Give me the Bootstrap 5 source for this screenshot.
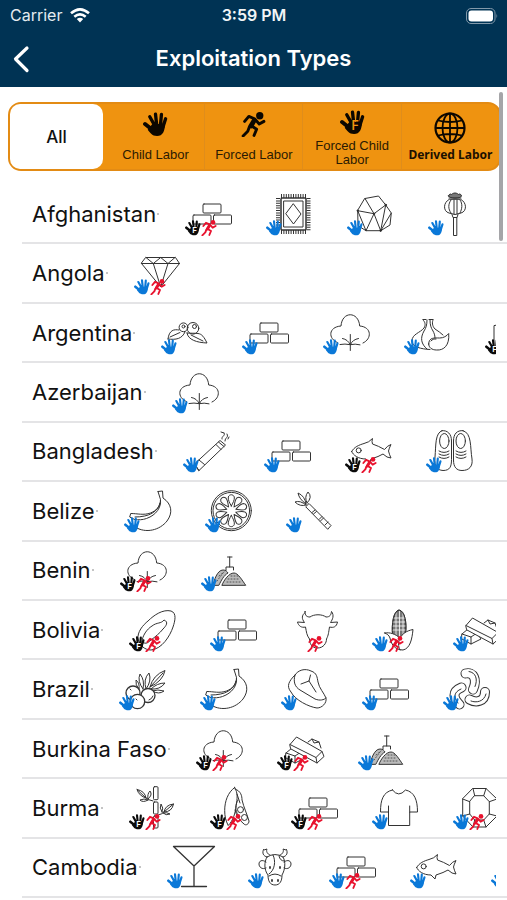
<!DOCTYPE html>
<html lang="en">
<head>
<meta charset="utf-8">
<meta name="viewport" content="width=device-width, initial-scale=1">
<title>Exploitation Types</title>
<link href="https://cdn.jsdelivr.net/npm/bootstrap@5.3.0/dist/css/bootstrap.min.css" rel="stylesheet">
<style>
body{font-family:Inter,"Liberation Sans",sans-serif;color:#111;background:#fff}
.top-area{background:#003354;color:#fff}
.status-bar{height:30px;padding:0 9px 0 10px;font-size:16px;color:#e4ebf0}
.clock{font-weight:600;color:#f2f5f7}
.status-bar>*{flex:1 1 0}
.title-bar{height:57px;padding:0 12px}
.title-bar>*{flex:1 0 auto}
.title-bar .side{flex:1 1 0}
.title-bar h1{font-size:22px;font-weight:600}
.segments{margin:15px 6px 14px 8px;height:69px;background:#ef9310;border:2px solid #e38b14;border-radius:13px}
.segments .seg{flex:1 1 0;min-width:0;padding:0;border:0;border-radius:10px;color:#2b1a02;font:13px/14px "Liberation Sans",Arial,sans-serif}
.segments .seg+input+.seg{border-left:1px solid #df8d1c;border-radius:0}
.segments .seg.first-seg{flex:0 0 19%;margin-right:3px}
.segments .btn-check:checked+.seg{background:#fff;color:#111;font:500 17px/20px Inter,sans-serif;border-radius:10px}
.segments .btn-check:checked+.seg+input+.seg{border-left-color:transparent}
.segments .seg.roomy{gap:11px}
.segments .seg.heavy{font:700 12px/14px "Noto Sans","Open Sans",sans-serif;color:#1c1000;white-space:nowrap}
.segments svg{color:#0c0700;--cut:#ef9310}
.scroll-thumb{position:absolute;right:4px;top:92px;width:4px;height:149px;border-radius:2px;background:#a5a5a8}
.countries{padding:0 0 2px 22px}
.country{flex:1 0 59px;border-bottom:2px solid #e4e4e6;padding:0 11px 0 10px}
.country h2{font-size:22px;line-height:28px;font-weight:400}
.tick{width:2px;height:2px;background:#c4c4c4;margin:0 26px 0 1px}
.goods{gap:33px;min-width:0}
.good{width:48px;height:44px;flex:none;overflow:visible;fill:none;stroke:#333;stroke-width:1;stroke-linejoin:round;stroke-linecap:round;--cut:#fff}
.tone-child{color:#0a78d8}
.tone-forced{color:#e8112d}
.tone-both{color:#0b0b0b}
</style>
<script src="https://cdn.jsdelivr.net/npm/bootstrap@5.3.0/dist/js/bootstrap.bundle.min.js"></script>
</head>
<body>
<svg width="0" height="0" class="position-absolute" aria-hidden="true"><defs>
<symbol id="hand" viewBox="0 0 24 24"><g fill="none" stroke="currentColor" stroke-width="3.2" stroke-linecap="round"><path d="M6.500 4.500l5 9M12 2l1.200 11M17.700 2.300l-1 11M21.700 6.500l-2.500 8"/><path d="M2 11.500l7.500 6" stroke-width="3.800"/></g><path fill="currentColor" stroke="none" d="M9 11.500h12c0 7-2 11.500-7.500 11.500-5 0-7-3.500-9-6z"/></symbol>
<symbol id="handf" viewBox="0 0 24 24"><use href="#hand" width="24" height="24"/><text x="11" y="19" font-family="Inter,sans-serif" font-size="12" font-weight="600" stroke="none" style="fill:var(--cut)">F</text></symbol>
<symbol id="runner" viewBox="0 0 24 24"><circle cx="18" cy="3.600" r="3.500" fill="currentColor" stroke="none"/><g fill="none" stroke="currentColor" stroke-width="2.800" stroke-linecap="round" stroke-linejoin="round"><path d="M3.500 9l4-4.800L13 6.500l4.500 5 4.500-2.500"/><path stroke-width="4.600" d="M12.500 8.500L9.500 13.500"/><path d="M9.500 13l5.500 3.500-2.500 6M8 14.500L6.500 18.500 2 23"/></g></symbol>
<g id="brick"><rect x="18" y="12" width="18" height="9" rx="1"/><rect x="8" y="23" width="18" height="9" rx="1"/><rect x="28.500" y="23" width="18" height="9" rx="1"/></g>
<g id="carpet"><path stroke-width="4" stroke-dasharray="1 1.400" stroke-linecap="butt" d="M15 4h25M15 40h25M12 6v33M42.500 6v33"/><rect x="15" y="6" width="25" height="32" rx="1" fill="#fff" stroke-width="1.500"/><rect x="18" y="9" width="19" height="26"/><path d="M27.500 12l7.500 10-7.500 10-7.500-10z"/></g>
<g id="diamond"><path d="M12 6.500h29.500l4 6L26.700 36 7.500 12.500zM7.500 12.500h38M12 6.500l7.300 6 7.400-6 7.300 6 7-6M19.300 12.500L26.700 36 34 12.500"/></g>
<g id="rock"><path d="M18 6.500l13.500-2.500 7.200 9 5.600 8L43 33l-9.300 5.700H19l-8-5-.3-15zM27 21.700L18 6.500M27 21.700L10.700 18.700M27 21.700L38.700 13M27 21.700L19 38.700M27 21.700l6.700 17L38.700 13M33.700 38.700l10.500-17.500M10.700 18.700l8.300 20"/><g fill="#222"><circle cx="38.700" cy="13" r=".8"/><circle cx="33.700" cy="38.500" r=".9"/><circle cx="27" cy="21.700" r=".7"/><circle cx="10.700" cy="18.700" r=".7"/></g></g>
<g id="poppy"><path d="M21 7.500c-6 3-6 12 0 13.500q6 3 12 0c6-1.500 6-10.500 0-13.500zM23 8c-3 4-3 9 0 13M26 8v14M29 8v14M32 8c3 4 2 9 0 13"/><path fill="#777" d="M20.500 4c0-2 3-2.500 3-1.500 2-2 5-2 7 0 0-1 3-.5 3 1.500-1 3-12 3-13 0zM21 6h12"/><path d="M24 22.500l1 3h4l1-3M25.500 25.500v18h3.300v-18"/></g>
<g id="berry"><circle cx="32" cy="17.300" r="5.800"/><circle cx="22.500" cy="16.300" r="4.400"/><circle cx="33.500" cy="15.500" r="2"/><circle cx="22.500" cy="15.500" r="1.500"/><path d="M7 28c1-9 6-10 11-9M7 28c8 1 14 0 17-7M9 26l10-4.500M26 22c1 7 10 9.500 20 10-3-6-5-9-9-9.500-3-.5-7 0-11-.5M30 24l12 6"/></g>
<g id="cotton"><path d="M14.500 31.500C5 28 5 16 18 15 19 0 35.500 0 36.700 15 49 16 49 28 40 32M17 33.500q5-1 10.300.2Q32 32.500 37 33.800M27.300 23.500V39.500M19.500 27.500q5.500 1 7.500 6M35.500 27.500q-6 1-8 6"/></g>
<g id="garlic"><path d="M19 9c2 1.500 3 5 1 8-4 5-12 6-12 13 0 6 9 8 18 8.500M29 9c-1 2-1 6 2 9 3 2 6 4 8 6M23 9c0 5-1 8-3 11-4 7-3 13 3 18M26 9c0 5 1 8 3 11 1 2 2 4 2 7M19 8.500h3M25 8.500h4M24.700 33c0-7 6-6 11-6 4 0 7-2 9-4.500 1 12-5 17-12 16.500-5 0-8-2.500-8-6zM27 30c1.500-2 3-2 5-2"/></g>
<g id="smoke"><path d="M12 34.500L37 11.500l5.500 4.500L16 41.500zM16 31l5.500 4.500M33 15.500l5 5M35.500 13l5.500 4.500M12 34.500q2 5 4 7M39 10c-1-3 4-3 2-6M42 12c0-4 4-3 2-7M38 3l3 1M45 10l1-2"/></g>
<g id="fish"><path d="M6.700 22.500C9 18 14 16 19 14.500q5-1 8.500-5-1 3 0 5.500 6 2 12 5.500 3-4 6.500-5-2 4-2.500 6.500 1 4 2.500 7-4 0-8-4-4 2.500-12 5l-1 4-4-4C13 30 8 26 6.700 22.500z"/><circle cx="13.700" cy="21.400" r="2.500"/></g>
<g id="shoes"><path d="M16 1.700C9 4 10 16 9 28c-1 10 2 13 8 13.500 7 0 8.500-4 8.500-11V12c0-7-4-11-9.500-10.300zM37 1.700C31 1 27.500 5 27.500 12v19c0 7 3 10.500 8.500 10.500 7 0 11-4 10-11.500C44 18 46 4 37 1.700z"/><ellipse cx="18.300" cy="12" rx="4.700" ry="7.500"/><ellipse cx="34.700" cy="12" rx="4.700" ry="7.500"/><path d="M13 22q5 3 10 0M13 25q5 3 10 0M13 28q5 3 10 0M30 22q5 3 10 0M30 25q5 3 10 0M30 28q5 3 10 0"/></g>
<g id="sheet"><path d="M9 15v27h30V9z"/></g>
<g id="banana"><path d="M34 2.500l4.500-.5.500 7c9 6 10 15 4 23-7 9-21 13-32 6M34 2.500l2.500 8c0 7-4 11-10 13.500-7 2.500-13 .500-19.800.5l-1 3.500 4 2M36.500 11c1 7-4 15-14 18.500-4 1.500-8 1.500-12 1M36 14c-2 9-11 14-25 14"/></g>
<path id="petal" d="M26.300 17c-1.500-3-3.500-6-3-9 1-3 5-3 6 0 .5 3-1.500 6-3 9z"/>
<g id="orange"><circle cx="26.300" cy="21.700" r="20"/><circle cx="26.300" cy="21.700" r="18.300"/><use href="#petal"/><use href="#petal" transform="rotate(36 26.300 21.700)"/><use href="#petal" transform="rotate(72 26.300 21.700)"/><use href="#petal" transform="rotate(108 26.300 21.700)"/><use href="#petal" transform="rotate(144 26.300 21.700)"/><use href="#petal" transform="rotate(180 26.300 21.700)"/><use href="#petal" transform="rotate(216 26.300 21.700)"/><use href="#petal" transform="rotate(252 26.300 21.700)"/><use href="#petal" transform="rotate(288 26.300 21.700)"/><use href="#petal" transform="rotate(324 26.300 21.700)"/></g>
<g id="cane"><path d="M20 17.500l3-3 22 22-3 3.500zM26 23.500l3-2.500M27.500 25l3-2.500M33 30.500l3-3M34.500 32l3-3M39 36l3-3M20 16q-6 2-11-3 5-2 11 3M20 15q-7-5-8-11 7 3 8 11M21 14q-3-6 1-11 5 5-1 11"/></g>
<g id="pile"><path fill="#bbb" d="M21 37c2-5 7-12 12-12 4 0 8 7 11.500 12zM12 37c1-4 4-15 10-15 3 0 4 1.500 5 3-4 2-7 8-9 12z"/><path stroke="#555" stroke-dasharray="1 2" d="M26 34h15M27 31h12M30 28h7M16 33l6-8M18 28l5-4"/><path d="M26.500 9h4.500M28.700 9v10M25 22v-3h7.500v3"/></g>
<g id="papaya"><path d="M9 31c-1-7 5-14 10-18C25 7 34 1 42 3c6 2 4 10 2 16-3 9-11 22-22 23-6 0-11-4-13-11z"/><path d="M13 34c0-6 5-13 10-16 5-4 9-2 12-6 5 2 2 6-1 9-3 4-8 8-12 11-3 2-4 5-9 2z"/></g>
<g id="bull"><path d="M14 3.500c0 4 1.500 5.500 5 5.500 4-3 12-3 16 0 4 0 5-2 5.500-5.500 3 4 1 8-1 11l7-.5c-1 5-4 6-8 5-1 6-1 8-3 12 0 4-3 9-9 9s-8-5-8-9c-3-4-3-7-4-12-4 1-7-1-8-5l7 .5c-3-4-3-7 .5-10z"/></g>
<g id="corn"><path fill="#777" d="M20.500 26c-1-10 1-23 6.500-24 6 1 8 13 6.500 24-4 5-9 5-13 0z"/><path stroke="#fff" stroke-width=".8" d="M21 10h13M20 14h14M20 18h14M20 22h14M24 5v22M27.500 3v26M31 5v22"/><path d="M20.500 26c-1-10 1-23 6.500-24 6 1 8 13 6.500 24"/><path fill="#fff" d="M12.700 25c5-1 11 1 15 5 3-4 6-7 13.300-8.500-1 10-3 19-10 20.500-9 0-12-7-13-12-1-3-3-4-5.300-5zM28 30c-2 4-2 8 0 12"/></g>
<g id="gold"><path d="M31 15l4-3 7 3 2 6M35 12l2 4 5-1M9 26l6-5 9 4 4 6-10 5-9-5zM9 26l9 3v7M18 29l6-4"/><path fill="#fff" d="M13 17.500l6.500-7.500L45 24.500l2 5-7 6.500L14 22zM13 17.500l26 13 6-6M39 30.500l1 5.500"/></g>
<g id="acai"><path d="M24 22q-6-8-3-15 5 6 3 15M27 22q-3-10 3-16 3 8-3 16M31 20q3-12 15-16.500Q44 14 31 20M31 20l13-14M32 22q6-6 14-6-5 7-14 6M33 24q6-2 12 0-5 4-12 0M20 22q-4-4-3-9 4 3 3 9"/><g fill="#fff" stroke-width="1.300"><circle cx="14" cy="26" r="7"/><circle cx="29" cy="28.500" r="7"/><circle cx="18.500" cy="34.500" r="7.200"/></g><path d="M17 32l1 1M30 33q3-1 4-4M11 22l1 1"/></g>
<g id="steak"><path d="M14 8C17 3 24 1 30 4c6 2 6 6 7 11 1 6 6 11 8 16 1 5-4 10-9 10C28 40 14 33 10 25c-5-6-2-11 4-17zM14 8c-2 7 0 12 5 15l15 9c5 2 9 1 11-1M20 17l8-3 1.500-6M28 14l7 11"/></g>
<g id="nuts"><g stroke="#333" stroke-width="10"><path d="M22.500 6.500c8-2 12 6 7.500 16"/><path d="M18.500 20.500c-10 4-8 11-2 17"/><path d="M42 25c0 10-9 11-15.500 7.500"/></g><g stroke="#fff" stroke-width="8"><path d="M22.500 6.500c8-2 12 6 7.500 16"/><path d="M18.500 20.500c-10 4-8 11-2 17"/><path d="M42 25c0 10-9 11-15.500 7.500"/></g><path d="M26 4.500c7 1 9 8 6 15M18 22c-7 3-8 8-3 14M43 27c-2 8-10 9-15 7"/></g>
<g id="bamboo"><rect x="24.500" y=".7" width="4.500" height="13" rx="1"/><rect x="24.500" y="16" width="4.500" height="12" rx="1"/><rect x="24.500" y="30" width="4.500" height="12" rx="1"/><path d="M24 15q-5-1-7-3M17 12Q10 10 8 3.500 16 5 17 12M8 3.500l9 8.500M19 13q-1-5 2-8 3 4-2 8M19 14q-5 3-8 0 4-2 8 0M29.500 29q4-1 5.500-3M35 26q1-7 9.500-8Q43 26 35 26M44.500 18L35 26M33 26q-3-4-1-8 3 4 1 8M34 27q4-1 7 1-4 2-7-1"/></g>
<g id="pod"><path d="M24.700 1.500c-7 5-10 14-10 23 0 6 1 10 3.500 15 5-5 7-12 8-20 1-7 2-12-1.500-18zM25 3c6 2 7 7 7 11 2 8 5 14 7 21 0 3-3 5-5 3-4-3-8-9-9-14M28 14c-3 5-3 10 0 15"/><circle cx="30.500" cy="23.700" r="3"/><circle cx="34.500" cy="31.500" r="3"/><path d="M27 8l3 9"/></g>
<g id="shirt"><path d="M20.500 4q6 8 13 0c9 2 12 10 12 22h-7.800v13.500H16.500V26H8.500C8.500 14 11 6 20.500 4zM16.500 20v6M37.700 20v6"/></g>
<g id="gem"><path d="M20 2.500h13l11 10.500v17L33 41H20L9.700 30V13zM21.700 9.700h9l5.600 6V28l-5.600 6h-9l-5-6V15.700zM20 2.500l1.700 7.200M33 2.500l-2.300 7.200M44 13l-7.700 2.700M44 30l-7.700-2M33 41l-2.300-7M20 41l1.700-7M9.700 30l7-2M9.700 13l7 2.700"/></g>
<g id="glass"><path stroke-width="1.300" d="M6.500 1.500h41L27 21zM27 21v20.500M14.500 41.500h25"/></g>
<g id="cow"><path d="M19 12c-4-1-5-4-3.500-7.500M22 10c-3-1-4-4-3-6l-3 1M35 12c4-1 5-4 3.500-7.500M32 10c3-1 4-4 3-6l3 1M19 12q8-5 16 0c3 5 2 13-1 18 0 6-2 10-7 10s-7-4-7-10c-4-5-4-13-1-18zM18 17c-4-3-7-1-7 2s3 6 7 4M36 17c4-3 7-1 7 2s-3 6-7 4M21 31q6-4 12 0M25 10c3 6 2 15-4 19M31 11q1 5 5 5"/><path stroke-width="1.800" d="M22 22v1M32 22v1M24 35v1M30 35v1"/></g>
<g id="b-c" class="tone-child"><use href="#hand" y="28" width="16" height="16"/></g>
<g id="b-fc" class="tone-both"><use href="#handf" y="28" width="16" height="16"/></g>
<g id="b-f" class="tone-forced"><use href="#runner" x="16" y="28" width="16" height="16"/></g>
</defs></svg>

<div class="d-flex flex-column min-vh-100 position-relative">
<header class="top-area">
<div class="status-bar d-flex align-items-center">
<div class="d-flex align-items-center gap-2"><span>Carrier</span><svg width="20" height="15" viewBox="0 0 20 15" fill="none" stroke="#fff" stroke-width="2.600" aria-hidden="true"><path d="M1 5.300Q10-2.600 19 5.300M4.300 8.700q5.700-4.600 11.400 0"/><path fill="#fff" stroke="none" d="M6.800 11q3.200-2.600 6.400 0L10 14.500z"/></svg></div>
<div class="clock text-center">3:59 PM</div>
<div class="text-end lh-1"><svg width="32" height="16" viewBox="0 0 32 16" aria-hidden="true"><rect x=".5" y=".5" width="28.500" height="15" rx="4.500" fill="none" stroke="#8299aa"/><rect x="2.500" y="2.500" width="24.500" height="11" rx="3" fill="#fff"/><path d="M30.500 5.500q1.500 2.500 0 5z" fill="#8299aa"/></svg></div>
</div>
<div class="title-bar d-flex align-items-center">
<div class="side"><button type="button" class="btn p-0 border-0 d-flex" aria-label="Back"><svg width="18" height="28" viewBox="0 0 18 28" fill="none" stroke="#fff" stroke-width="3.200" stroke-linecap="round" stroke-linejoin="round"><path d="M15 3L3.500 14 15 25.500"/></svg></button></div>
<h1 class="m-0 text-center">Exploitation Types</h1>
<div class="side"></div>
</div>
</header>

<div class="segments d-flex" role="group" aria-label="Labor type">
<input class="btn-check" type="radio" name="kind" id="k-all" checked><label class="btn seg first-seg d-flex align-items-center justify-content-center" for="k-all">All</label>
<input class="btn-check" type="radio" name="kind" id="k-child"><label class="btn seg roomy d-flex flex-column align-items-center justify-content-center" for="k-child"><svg width="25" height="25" aria-hidden="true"><use href="#hand"/></svg>Child Labor</label>
<input class="btn-check" type="radio" name="kind" id="k-forced"><label class="btn seg roomy d-flex flex-column align-items-center justify-content-center" for="k-forced"><svg width="25" height="25" aria-hidden="true"><use href="#runner"/></svg>Forced Labor</label>
<input class="btn-check" type="radio" name="kind" id="k-both"><label class="btn seg d-flex flex-column align-items-center justify-content-center gap-1 pt-1" for="k-both"><svg class="flex-shrink-0" width="25" height="25" aria-hidden="true"><use href="#handf"/></svg><span>Forced Child<br>Labor</span></label>
<input class="btn-check" type="radio" name="kind" id="k-derived"><label class="btn seg heavy d-flex flex-column align-items-center justify-content-center gap-1" for="k-derived"><svg width="32" height="32" viewBox="0 0 32 32" fill="none" stroke="currentColor" stroke-width="1.800" aria-hidden="true"><circle cx="16" cy="16" r="14.500" stroke-width="2.200"/><ellipse cx="16" cy="16" rx="7.500" ry="14.500"/><path d="M16 1.500v29M1.500 16h29M4 8.500q12 3 24 0M4 23.500q12-3 24 0"/></svg>Derived Labor</label>
</div>

<main class="countries d-flex flex-column flex-grow-1">
<section class="country d-flex align-items-center"><h2 class="m-0 text-nowrap">Afghanistan</h2><i class="tick flex-shrink-0"></i><div class="goods d-flex flex-grow-1 overflow-hidden">
<svg class="good"><use href="#brick"/><use href="#b-fc"/><use href="#b-f"/></svg>
<svg class="good"><use href="#carpet"/><use href="#b-c"/></svg>
<svg class="good"><use href="#rock"/><use href="#b-c"/></svg>
<svg class="good"><use href="#poppy"/><use href="#b-c"/></svg></div></section>
<section class="country d-flex align-items-center"><h2 class="m-0 text-nowrap">Angola</h2><i class="tick flex-shrink-0"></i><div class="goods d-flex flex-grow-1 overflow-hidden">
<svg class="good"><use href="#diamond"/><use href="#b-c"/><use href="#b-f"/></svg></div></section>
<section class="country d-flex align-items-center"><h2 class="m-0 text-nowrap">Argentina</h2><i class="tick flex-shrink-0"></i><div class="goods d-flex flex-grow-1 overflow-hidden">
<svg class="good"><use href="#berry"/><use href="#b-c"/></svg>
<svg class="good"><use href="#brick"/><use href="#b-c"/></svg>
<svg class="good"><use href="#cotton"/><use href="#b-c"/></svg>
<svg class="good"><use href="#garlic"/><use href="#b-c"/></svg>
<svg class="good"><use href="#sheet"/><use href="#b-fc"/></svg></div></section>
<section class="country d-flex align-items-center"><h2 class="m-0 text-nowrap">Azerbaijan</h2><i class="tick flex-shrink-0"></i><div class="goods d-flex flex-grow-1 overflow-hidden">
<svg class="good"><use href="#cotton"/><use href="#b-c"/></svg></div></section>
<section class="country d-flex align-items-center"><h2 class="m-0 text-nowrap">Bangladesh</h2><i class="tick flex-shrink-0"></i><div class="goods d-flex flex-grow-1 overflow-hidden">
<svg class="good"><use href="#smoke"/><use href="#b-c"/></svg>
<svg class="good"><use href="#brick"/><use href="#b-c"/></svg>
<svg class="good"><use href="#fish"/><use href="#b-fc"/><use href="#b-f"/></svg>
<svg class="good"><use href="#shoes"/><use href="#b-c"/></svg></div></section>
<section class="country d-flex align-items-center"><h2 class="m-0 text-nowrap">Belize</h2><i class="tick flex-shrink-0"></i><div class="goods d-flex flex-grow-1 overflow-hidden">
<svg class="good"><use href="#banana"/><use href="#b-c"/></svg>
<svg class="good"><use href="#orange"/><use href="#b-c"/></svg>
<svg class="good"><use href="#cane"/><use href="#b-c"/></svg></div></section>
<section class="country d-flex align-items-center"><h2 class="m-0 text-nowrap">Benin</h2><i class="tick flex-shrink-0"></i><div class="goods d-flex flex-grow-1 overflow-hidden">
<svg class="good"><use href="#cotton"/><use href="#b-fc"/><use href="#b-f"/></svg>
<svg class="good"><use href="#pile"/><use href="#b-c"/></svg></div></section>
<section class="country d-flex align-items-center"><h2 class="m-0 text-nowrap">Bolivia</h2><i class="tick flex-shrink-0"></i><div class="goods d-flex flex-grow-1 overflow-hidden">
<svg class="good"><use href="#papaya"/><use href="#b-fc"/><use href="#b-f"/></svg>
<svg class="good"><use href="#brick"/><use href="#b-c"/></svg>
<svg class="good"><use href="#bull"/><use href="#b-f"/></svg>
<svg class="good"><use href="#corn"/><use href="#b-c"/><use href="#b-f"/></svg>
<svg class="good"><use href="#gold"/><use href="#b-c"/></svg></div></section>
<section class="country d-flex align-items-center"><h2 class="m-0 text-nowrap">Brazil</h2><i class="tick flex-shrink-0"></i><div class="goods d-flex flex-grow-1 overflow-hidden">
<svg class="good"><use href="#acai"/><use href="#b-c"/></svg>
<svg class="good"><use href="#banana"/><use href="#b-c"/></svg>
<svg class="good"><use href="#steak"/><use href="#b-c"/></svg>
<svg class="good"><use href="#brick"/><use href="#b-c"/></svg>
<svg class="good"><use href="#nuts"/><use href="#b-c"/></svg></div></section>
<section class="country d-flex align-items-center"><h2 class="m-0 text-nowrap">Burkina Faso</h2><i class="tick flex-shrink-0"></i><div class="goods d-flex flex-grow-1 overflow-hidden">
<svg class="good"><use href="#cotton"/><use href="#b-fc"/><use href="#b-f"/></svg>
<svg class="good"><use href="#gold"/><use href="#b-fc"/><use href="#b-f"/></svg>
<svg class="good"><use href="#pile"/><use href="#b-c"/></svg></div></section>
<section class="country d-flex align-items-center"><h2 class="m-0 text-nowrap">Burma</h2><i class="tick flex-shrink-0"></i><div class="goods d-flex flex-grow-1 overflow-hidden">
<svg class="good"><use href="#bamboo"/><use href="#b-fc"/><use href="#b-f"/></svg>
<svg class="good"><use href="#pod"/><use href="#b-fc"/><use href="#b-f"/></svg>
<svg class="good"><use href="#brick"/><use href="#b-fc"/><use href="#b-f"/></svg>
<svg class="good"><use href="#shirt"/><use href="#b-c"/></svg>
<svg class="good"><use href="#gem"/><use href="#b-c"/><use href="#b-f"/></svg></div></section>
<section class="country d-flex align-items-center"><h2 class="m-0 text-nowrap">Cambodia</h2><i class="tick flex-shrink-0"></i><div class="goods d-flex flex-grow-1 overflow-hidden">
<svg class="good"><use href="#glass"/><use href="#b-c"/></svg>
<svg class="good"><use href="#cow"/><use href="#b-c"/></svg>
<svg class="good"><use href="#brick"/><use href="#b-c"/><use href="#b-f"/></svg>
<svg class="good"><use href="#fish"/><use href="#b-c"/></svg>
<svg class="good"><use href="#b-c"/></svg></div></section>
</main>
<div class="scroll-thumb" aria-hidden="true"></div>
</div>
</body>
</html>
